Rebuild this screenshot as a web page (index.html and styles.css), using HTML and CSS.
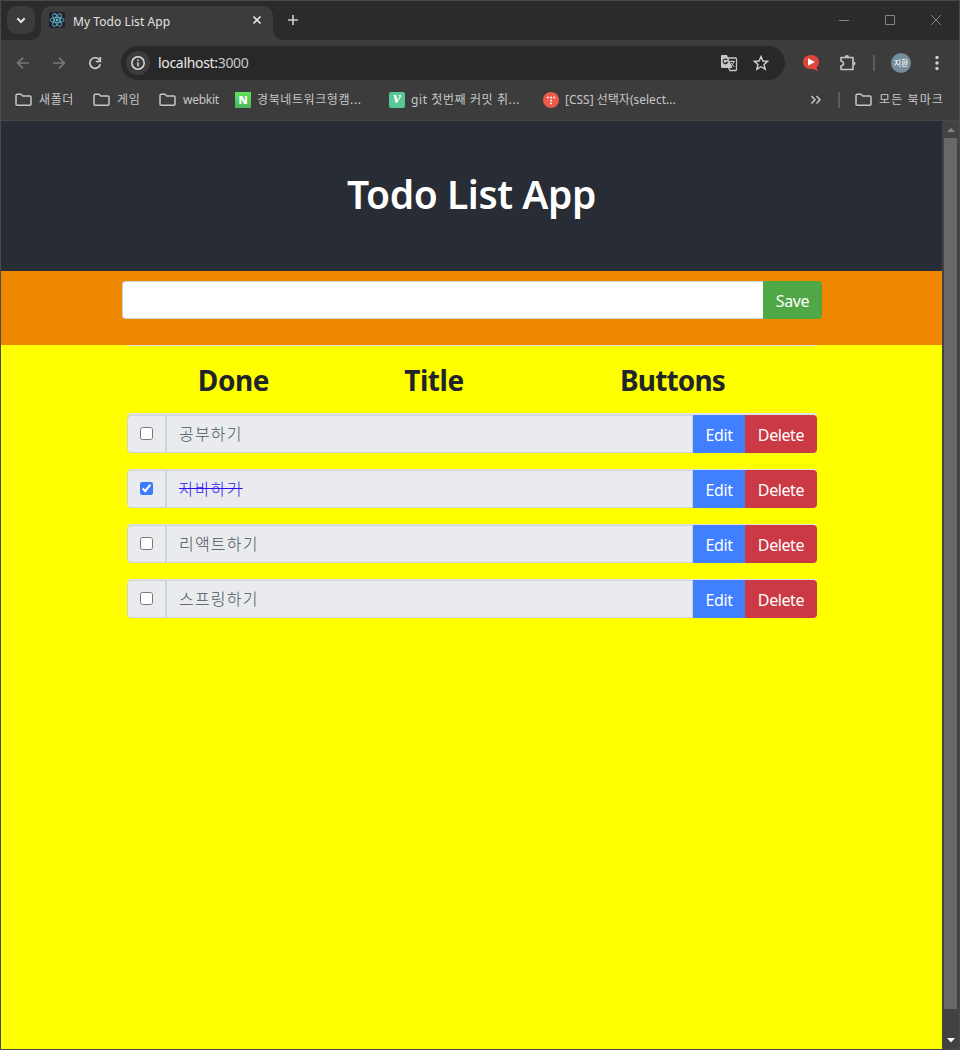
FILE: index.html
```html
<!DOCTYPE html>
<html lang="ko">
<head>
<meta charset="utf-8">
<title>My Todo List App</title>
<link rel="stylesheet" href="styles.css">
</head>
<body>
<svg class="defs" width="0" height="0">
  <symbol id="folder" viewBox="0 0 18 14"><path d="M1 11V2.500Q1 1.200 2.300 1.200H6L7.800 3H14.700Q16 3 16 4.300V11Q16 12.300 14.700 12.300H2.300Q1 12.300 1 11Z" fill="none" stroke="#c7c7c7" stroke-width="1.500"/></symbol>
</svg>
<div class="window">
  <div class="tabstrip">
    <div class="tab-search"><svg width="28" height="28" viewBox="0 0 28 28"><path d="M10.300 12.300L14 16L17.700 12.300" fill="none" stroke="#e3e3e3" stroke-width="2"/></svg></div>
    <div class="tab">
      <svg class="favicon" width="16" height="16" viewBox="0 0 16 16"><rect width="16" height="16" rx="2" fill="#20232a"/><g fill="none" stroke="#61b4d0" stroke-width=".9"><ellipse cx="8" cy="8" rx="7" ry="2.700"/><ellipse cx="8" cy="8" rx="7" ry="2.700" transform="rotate(60 8 8)"/><ellipse cx="8" cy="8" rx="7" ry="2.700" transform="rotate(120 8 8)"/></g><circle cx="8" cy="8" r="1.400" fill="#61b4d0"/></svg>
      <span class="tab-title">My Todo List App</span>
      <svg class="tab-close" width="16" height="16" viewBox="0 0 16 16"><path d="M4.500 4.500L11.500 11.500M11.500 4.500L4.500 11.500" stroke="#e3e3e3" stroke-width="1.700"/></svg>
    </div>
    <svg class="new-tab" width="16" height="16" viewBox="0 0 16 16"><path d="M8 3V13M3 8H13" stroke="#d0d0d0" stroke-width="1.600"/></svg>
    <svg class="controls" width="112" height="16" viewBox="0 0 112 16" fill="none" stroke="#858585"><path d="M1 8.500H11M47.500 3.500H56.500V12.500H47.500ZM93 3L103 13M103 3L93 13"/></svg>
  </div>
  <div class="toolbar">
    <svg class="nav" width="104" height="16" viewBox="0 0 104 16" fill="none" stroke-width="1.700"><path d="M14 8H3M8 2.700L2.700 8L8 13.300M38 8H49M44 2.700L49.300 8L44 13.300" stroke="#777"/><path d="M84.600 5.200A5.300 5.300 0 1 0 85.300 9.200" stroke="#d0d0d0"/><path d="M85.300 2V6.500H80.800" stroke="#d0d0d0"/></svg>
    <div class="omnibox">
      <div class="info"><svg width="16" height="16" viewBox="0 0 16 16" fill="none" stroke="#dedede" stroke-width="1.500"><circle cx="8" cy="8" r="6.200"/><path d="M8 7.200V11.300M8 4.500V6"/></svg></div>
      <span class="url">localhost:<span class="port">3000</span></span>
      <svg class="translate" width="18" height="18" viewBox="0 0 18 18"><path d="M2 1H7L12.500 14H2Q1 14 1 13V2Q1 1 2 1Z" fill="#c7c7c7"/><path d="M8 4H15.500Q16.500 4 16.500 5V15.500Q16.500 16.500 15.500 16.500H10L8.500 13.500" fill="none" stroke="#c7c7c7" stroke-width="1.300"/><path d="M7.300 6A2.300 2.300 0 1 0 7.500 8.300H5.600" fill="none" stroke="#282828" stroke-width="1.200"/><path d="M9.500 7.500H15M12 6.200V7.500M14 7.500Q13 10.500 10.500 12.500M11 9L14.500 13" fill="none" stroke="#c7c7c7"/></svg>
      <svg class="star" width="18" height="18" viewBox="0 0 18 18"><path d="M9 2.500L10.900 7L15.600 7.400L12 10.500L13.200 15.200L9 12.700L4.800 15.200L6 10.500L2.400 7.400L7.100 7Z" fill="none" stroke="#d0d0d0" stroke-width="1.400"/></svg>
    </div>
    <svg class="ext-video" width="18" height="18" viewBox="0 0 18 18"><path d="M9 1C14 1 17 4 17 8C17 10.500 16 12 14.500 13.500L16 17L10.500 15C4.500 15.500 1 12.500 1 8C1 4 4 1 9 1Z" fill="#e0443a"/><path d="M6 4.300V11.700L13 8Z" fill="#fff"/></svg>
    <svg class="puzzle" width="18" height="18" viewBox="0 0 18 18"><path d="M2 3.500H14V15.500H2V12Q4.500 11.500 4.500 9.500Q4.500 7.500 2 7Z" fill="none" stroke="#c7c7c7" stroke-width="1.600" stroke-linejoin="round"/><path d="M6 3A2 2 0 0 1 10 3ZM14.500 7.500A2 2 0 0 1 14.500 11.500Z" fill="#c7c7c7"/></svg>
    <div class="bar-divider"></div>
    <div class="avatar">지환</div>
    <svg class="more" width="4" height="16" viewBox="0 0 4 16" fill="#d0d0d0"><circle cx="2" cy="2.500" r="1.700"/><circle cx="2" cy="8" r="1.700"/><circle cx="2" cy="13.500" r="1.700"/></svg>
  </div>
  <div class="bookmarks">
    <div class="bm bm-a"><svg width="18" height="14"><use href="#folder"/></svg><span class="ko">새폴더</span></div>
    <div class="bm bm-b"><svg width="18" height="14"><use href="#folder"/></svg><span class="ko">게임</span></div>
    <div class="bm bm-c"><svg width="18" height="14"><use href="#folder"/></svg><span class="latin">webkit</span></div>
    <div class="bm bm-d"><i class="site naver">N</i><span class="ko">경북네트워크형캠...</span></div>
    <div class="bm bm-e"><i class="site velog">v</i><span class="ko">git 첫번째 커밋 취...</span></div>
    <div class="bm bm-f"><i class="site tistory"><svg width="16" height="16" fill="#fff"><circle cx="4.800" cy="5.500" r="1"/><circle cx="8" cy="5.500" r="1"/><circle cx="11.200" cy="5.500" r="1"/><circle cx="8" cy="8.500" r="1"/><circle cx="8" cy="11.500" r="1"/></svg></i><span class="css">[CSS] 선택자(select...</span></div>
    <svg class="chevrons" width="12" height="12" viewBox="0 0 12 12"><path d="M1.500 2L5 5.800L1.500 9.600M6.500 2L10 5.800L6.500 9.600" fill="none" stroke="#c7c7c7" stroke-width="1.500"/></svg>
    <div class="bar-divider bm-divider"></div>
    <div class="bm bm-all"><svg width="18" height="14"><use href="#folder"/></svg><span class="ko">모든 북마크</span></div>
  </div>
  <div class="viewport">
    <div class="page">
      <header class="hero"><h1>Todo List App</h1></header>
      <form class="entry">
        <input class="entry-input" type="text" aria-label="Todo"><button class="btn save" type="button">Save</button>
      </form>
      <main class="list">
        <div class="list-head"><span class="h-done">Done</span><span class="h-title">Title</span><span class="h-buttons">Buttons</span></div>
        <div class="row"><div class="check"><input type="checkbox"></div><div class="title">공부하기</div><button class="btn edit">Edit</button><button class="btn delete">Delete</button></div>
        <div class="row"><div class="check"><input type="checkbox" checked></div><div class="title"><span class="done">자바하기</span></div><button class="btn edit">Edit</button><button class="btn delete">Delete</button></div>
        <div class="row"><div class="check"><input type="checkbox"></div><div class="title">리액트하기</div><button class="btn edit">Edit</button><button class="btn delete">Delete</button></div>
        <div class="row"><div class="check"><input type="checkbox"></div><div class="title">스프링하기</div><button class="btn edit">Edit</button><button class="btn delete">Delete</button></div>
      </main>
    </div>
    <div class="scrollbar">
      <svg width="8" height="5"><path d="M0 5L4 1L8 5Z" fill="#858585"/></svg>
      <div class="thumb"></div>
      <svg width="8" height="5"><path d="M0 0H8L4 4.500Z" fill="#fff"/></svg>
    </div>
  </div>
</div>
</body>
</html>
```
FILE: styles.css
```css
* { box-sizing: border-box; }
body { margin: 0; overflow: hidden; font-family: "Noto Sans", "Noto Sans CJK KR", sans-serif; }
svg { display: block; flex: none; }
.defs { position: absolute; }
.window { width: 960px; height: 1050px; border: 1px solid #4a4a4a; background: #3c3c3c; display: flex; flex-direction: column; }
.tabstrip { height: 39px; flex: none; background: #2b2b2b; display: flex; align-items: flex-start; padding: 5px 0 0 6px; }
.tab-search { width: 28px; height: 28px; border-radius: 10px; background: #3c3c3c; }
.tab { position: relative; margin-left: 6px; width: 232px; height: 34px; border-radius: 10px 10px 0 0; background: #3c3c3c; display: flex; align-items: center; padding: 0 8px; color: #e3e3e3; }
.tab::before, .tab::after { content: ""; position: absolute; bottom: 0; width: 10px; height: 10px; }
.tab::before { left: -10px; background: radial-gradient(circle at 0 0, transparent 9.5px, #3c3c3c 10px); }
.tab::after { right: -10px; background: radial-gradient(circle at 100% 0, transparent 9.5px, #3c3c3c 10px); }
.favicon { margin-top: -6px; }
.tab-title { margin-left: 8px; font-size: 12px; line-height: 18px; margin-top: -3px; flex: 1; white-space: nowrap; letter-spacing: .07px; }
.tab-close { margin-top: -6px; }
.new-tab { margin: 6px 0 0 12px; }
.controls { margin: 6px 9px 0 auto; }
.toolbar { height: 46px; flex: none; display: flex; align-items: center; padding-left: 14px; }
.nav { margin-right: 2px; }
.omnibox { width: 664px; height: 34px; border-radius: 17px; background: #282828; display: flex; align-items: center; padding: 0 15px 0 5px; }
.info { width: 24px; height: 24px; border-radius: 50%; background: #3c3c3c; display: grid; place-items: center; }
.url { margin-left: 8px; flex: 1; font-size: 14px; line-height: 20px; color: #e8e8e8; letter-spacing: -.32px; }
.port { color: #c7c7c7; }
.star { margin-left: 14px; }
.ext-video { margin-left: 17px; }
.puzzle { margin-left: 19px; }
.bar-divider { width: 2px; height: 16px; margin-left: 16px; background: #5c5c5c; }
.avatar { width: 20px; height: 20px; border-radius: 50%; margin-left: 16px; background: #768d9b; color: #fff; font-size: 8px; line-height: 19px; text-align: center; }
.more { margin-left: 24px; }
.bookmarks { height: 35px; flex: none; border-bottom: 1px solid #484845; display: flex; align-items: center; padding: 0 14px 6px 14px; font-size: 12px; color: #c7c7c7; }
.bm { display: flex; align-items: center; gap: 6px; white-space: nowrap; line-height: 18px; flex: none; }
.bm span { margin-top: -1px; }
.bm .ko { letter-spacing: .6px; }
.bm .latin { letter-spacing: -.25px; }
.bm-a { width: 78px; }
.bm-b { width: 66px; }
.bm-c { width: 76px; }
.bm-d { width: 154px; }
.bm-e { width: 154px; }
.bm-f { width: 140px; }
.site { width: 16px; height: 16px; flex: none; color: #fff; text-align: center; line-height: 16px; font-style: normal; font-weight: 900; font-size: 11px; }
.naver { background: linear-gradient(#5fe35b, #4cb55c); }
.velog { background: #57c795; border-radius: 2px; font-family: "Liberation Serif", serif; font-style: italic; font-size: 17px; line-height: 12px; }
.tistory { background: #ee5a49; border-radius: 50%; }
.chevrons { margin-left: auto; }
.bookmarks .bm-divider { margin-left: 16px; margin-right: 15px; }
.bm-all { width: 90px; }
.bm-all .ko { letter-spacing: 1.1px; }
.viewport { flex: 1; min-height: 0; display: flex; }
.page { width: 941px; background: #ff0; font-size: 16px; }
.hero { height: 150px; background: #282c34; color: #fff; display: flex; align-items: center; justify-content: center; }
h1 { margin: 0 0 4px; font-size: 39px; line-height: 48px; font-weight: 600; letter-spacing: -.45px; }
.entry { height: 74px; background: #f08700; padding: 10px 120px 0 121px; display: flex; }
.entry-input { flex: 1; min-width: 0; height: 38px; border: 1px solid #ced4da; border-right: 0; border-radius: 4px 0 0 4px; background: #fff; outline: 0; }
.btn { height: 38px; border: 0; padding: 1px 0 0; color: #fff; font: 16px/24px "Noto Sans", sans-serif; letter-spacing: -.4px; }
.save { width: 59px; background: #4fa745; border-radius: 0 4px 4px 0; }
.list { width: 690px; margin-left: 126px; border-top: 1px solid #dee2e6; }
.list-head { height: 69px; display: grid; grid-template-columns: 213px 188px 1fr; border-bottom: 2px solid #dee2e6; font-size: 28px; font-weight: 700; line-height: 34px; color: #212529; text-align: center; padding-top: 17px; letter-spacing: -.4px; }
.h-buttons { letter-spacing: -.85px; }
.row { height: 55px; display: grid; grid-template-columns: 39px 1fr 52px 72px; }
.row:not(:last-child) { border-bottom: 1px solid #dee2e6; }
.check, .title { height: 38px; background: #e9ebef; border: 1px solid #ced4da; }
.check { border-radius: 4px 0 0 4px; display: grid; place-items: center; padding-bottom: 1px; }
.check input { width: 13px; height: 13px; margin: 0; accent-color: #3c7bff; }
.title { padding-left: 12px; line-height: 34px; color: #495057; font-family: "Noto Sans CJK KR", sans-serif; font-weight: 300; letter-spacing: 1.2px; }
.done { color: #2b12f5; text-decoration: line-through; }
.edit { background: #407fff; }
.delete { background: #cb3945; border-radius: 0 4px 4px 0; }
.scrollbar { width: 17px; background: #424242; display: flex; flex-direction: column; align-items: center; padding: 6px 0; }
.thumb { width: 13px; height: 871px; background: #686868; margin: 6px 0 29px; }
```
